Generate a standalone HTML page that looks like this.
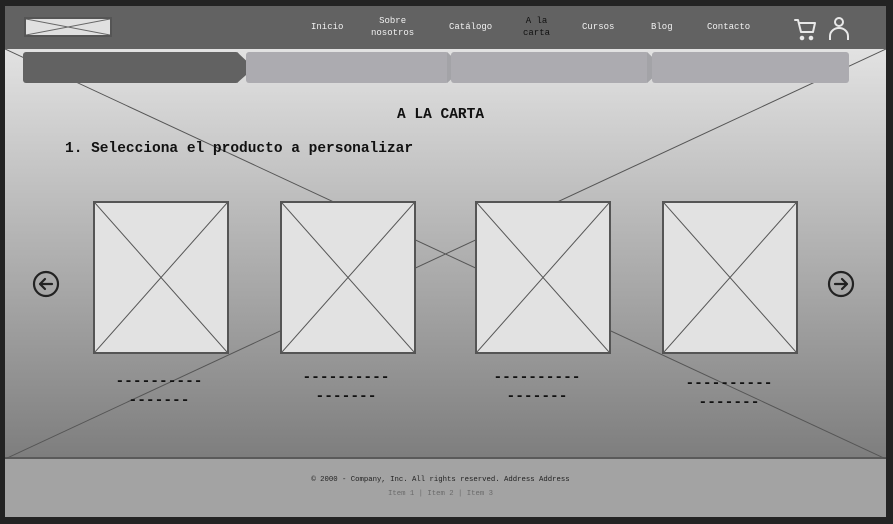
<!DOCTYPE html>
<html><head><meta charset="utf-8"><style>
*{margin:0;padding:0;box-sizing:border-box}
body{width:893px;height:524px;background:#232323;position:relative;overflow:hidden;font-family:"Liberation Mono",monospace}
#page{position:absolute;left:5px;top:6px;width:881px;height:511px;background:#a3a3a3}
#hdr{position:absolute;left:0;top:0;width:881px;height:43px;background:#626262}
#main{position:absolute;left:0;top:43px;width:881px;height:410px;background:linear-gradient(#e2e2e2,#7e7e7e);border-bottom:2px solid #5a5a5a}
.nav{position:absolute;color:#f0f0f0;font-size:9px;text-align:center;line-height:12px}
.nav.act{color:#111}
.box{position:absolute;top:201px;width:136px;height:153px;background:#e2e2e2;border:2px solid #555}
.t{position:absolute;font-weight:bold;color:#111;font-size:14.5px;white-space:pre}
.step{position:absolute;top:46px;height:31px;background:#acabb0;border-radius:3px}
.dash{position:absolute;font-weight:bold;font-size:14.5px;color:#111;text-align:center;width:136px;line-height:19px}
</style></head><body>
<div id="page">
<div id="main">
<svg width="881" height="410" style="position:absolute;left:0;top:0"><line x1="0" y1="0" x2="881" y2="410" stroke="#555" stroke-width="1"/><line x1="881" y1="0" x2="0" y2="410" stroke="#555" stroke-width="1"/></svg>
</div>
<div id="hdr">
<div style="position:absolute;left:19px;top:11px;width:88px;height:20px;border:2px solid #555;background:#e0e0e0"><svg width="84" height="16" style="position:absolute;left:0;top:0"><line x1="0" y1="0" x2="84" y2="16" stroke="#666"/><line x1="84" y1="0" x2="0" y2="16" stroke="#666"/></svg></div>
<div class="nav" style="left:306px;top:15px">Inicio</div>
<div class="nav" style="left:366px;top:9px">Sobre<br>nosotros</div>
<div class="nav" style="left:444px;top:15px">Catálogo</div>
<div class="nav act" style="left:518px;top:9px">A la<br>carta</div>
<div class="nav" style="left:577px;top:15px">Cursos</div>
<div class="nav" style="left:646px;top:15px">Blog</div>
<div class="nav" style="left:702px;top:15px">Contacto</div>
<svg style="position:absolute;left:789px;top:12px" width="24" height="24" viewBox="0 0 24 24" fill="none" stroke="#e8e8e8" stroke-width="2" stroke-linecap="round" stroke-linejoin="round"><path d="M1 2h3l3 12h12l2-9H6"/><circle cx="8" cy="20" r="1.3" fill="#e8e8e8"/><circle cx="17" cy="20" r="1.3" fill="#e8e8e8"/></svg>
<svg style="position:absolute;left:823px;top:10px" width="22" height="26" viewBox="0 0 22 26" fill="none" stroke="#e8e8e8" stroke-width="2"><circle cx="11" cy="6" r="4"/><path d="M2 24v-4a9 8 0 0 1 18 0v4"/></svg>
</div>
<div class="step" style="left:18px;width:216px;background:#626262"></div>
<svg style="position:absolute;left:232px;top:46px" width="20" height="32"><polygon points="0,0 17,16 0,31" fill="#626262"/></svg>
<div class="step" style="left:241px;width:203px"></div>
<svg style="position:absolute;left:442px;top:46px" width="20" height="32"><polygon points="0,0 17,16 0,31" fill="#a3a3a7"/></svg>
<div class="step" style="left:446px;width:198px"></div>
<svg style="position:absolute;left:642px;top:46px" width="20" height="32"><polygon points="0,0 17,16 0,31" fill="#a3a3a7"/></svg>
<div class="step" style="left:647px;width:197px"></div>
<div class="t" style="left:392px;top:101px">A LA CARTA</div>
<div class="t" style="left:60px;top:135px">1. Selecciona el producto a personalizar</div>
<svg style="position:absolute;left:27px;top:264px" width="28" height="28" viewBox="0 0 28 28" fill="none" stroke="#222" stroke-width="2.2" stroke-linecap="round" stroke-linejoin="round"><circle cx="14" cy="14" r="12"/><path d="M20 14H8M13 9l-5 5 5 5"/></svg>
<svg style="position:absolute;left:822px;top:264px" width="28" height="28" viewBox="0 0 28 28" fill="none" stroke="#222" stroke-width="2.2" stroke-linecap="round" stroke-linejoin="round"><circle cx="14" cy="14" r="12"/><path d="M8 14h12M15 9l5 5-5 5"/></svg>
</div>
<div class="box" style="left:93px"><svg width="132" height="149"><line x1="0" y1="0" x2="132" y2="149" stroke="#555"/><line x1="132" y1="0" x2="0" y2="149" stroke="#555"/></svg></div>
<div class="box" style="left:280px"><svg width="132" height="149"><line x1="0" y1="0" x2="132" y2="149" stroke="#555"/><line x1="132" y1="0" x2="0" y2="149" stroke="#555"/></svg></div>
<div class="box" style="left:475px"><svg width="132" height="149"><line x1="0" y1="0" x2="132" y2="149" stroke="#555"/><line x1="132" y1="0" x2="0" y2="149" stroke="#555"/></svg></div>
<div class="box" style="left:662px"><svg width="132" height="149"><line x1="0" y1="0" x2="132" y2="149" stroke="#555"/><line x1="132" y1="0" x2="0" y2="149" stroke="#555"/></svg></div>
<div class="dash" style="left:91px;top:373px">----------<br>-------</div>
<div class="dash" style="left:278px;top:369px">----------<br>-------</div>
<div class="dash" style="left:469px;top:369px">----------<br>-------</div>
<div class="dash" style="left:661px;top:375px">----------<br>-------</div>
<div style="position:absolute;left:0;top:476px;width:881px;text-align:center;font-size:7.3px;color:#222">© 2000 - Company, Inc. All rights reserved. Address Address</div>
<div style="position:absolute;left:0;top:490px;width:881px;text-align:center;font-size:7.3px;color:#6a6a6a">Item 1 | Item 2 |  Item 3</div>
</body></html>
